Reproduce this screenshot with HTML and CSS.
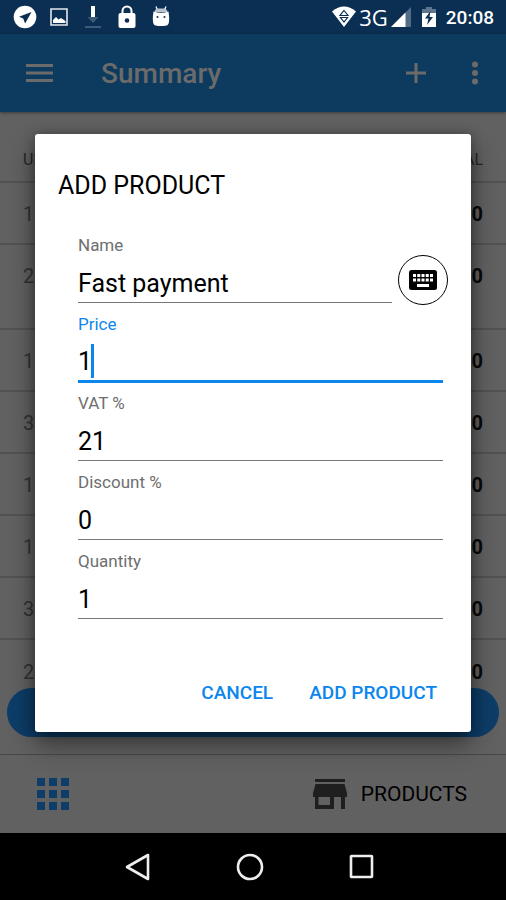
FILE: index.html
```html
<!DOCTYPE html>
<html lang="en">
<head>
<meta charset="utf-8">
<meta name="viewport" content="width=device-width, initial-scale=1">
<title>Summary</title>
<link rel="stylesheet" href="styles.css">
</head>
<body>
<div class="status">
  <div class="status-left">
    <svg class="telegram" width="24" height="24" viewBox="0 0 24 24"><circle cx="12" cy="12" r="11.3" fill="#fff"/><path d="M18.500 7L6 11.800l4.200 1.700 1.900 5z" fill="#0b2f52"/></svg>
    <svg width="18" height="24" viewBox="0 0 18 24"><path d="M1 4h16v16H1z" fill="none" stroke="#e4e8ec" stroke-width="1.600"/><path d="M3 18v-3l3-3 2.500 2.500L11 13l4.500 3v2z" fill="#fff"/></svg>
    <svg width="18" height="24" viewBox="0 0 18 24"><path d="M3.500 12h11L9 18z" fill="#3c5b77"/><path d="M7 1h4v11H7z" fill="#fff"/><path d="M1 21h16v2H1z" fill="#3c5b77"/></svg>
    <svg width="18" height="24" viewBox="0 0 18 24"><path d="M4.500 10V6a4.500 4.500 0 0 1 9 0v4" fill="none" stroke="#fff" stroke-width="2"/><rect x=".5" y="8" width="17" height="15" rx="2" fill="#fff"/><circle cx="9" cy="15.500" r="2.300" fill="#0b2f52"/></svg>
    <svg width="18" height="24" viewBox="0 0 18 24"><path d="M5.500 5L4 1.500M12.500 5L14 1.500" stroke="#fff" stroke-width="1.300"/><path d="M2.500 7Q3 3.500 6 3.500h6q3 0 3.500 3.500z" fill="#bac5cf"/><path d="M1.500 6.500q7.500 2.500 15 0Q18.500 20 14.500 20.500q-5.500 1-11 0Q-.5 20 1.500 6.500z" fill="#fff"/><circle cx="5.500" cy="12" r="1" fill="#0b2f52"/><circle cx="12.500" cy="12" r="1" fill="#0b2f52"/></svg>
  </div>
  <div class="status-right">
    <svg width="26" height="24" viewBox="0 0 26 24"><path d="M1 6.500Q13-3.500 25 6.500L13 22z" fill="#fff"/><path d="M13 5.500l4 5H9zM9.500 12.500h7L13 17z" fill="#fff" stroke="#0b2f52" stroke-width="1.200"/></svg>
    <span class="net">3G</span>
    <svg width="20" height="24" viewBox="0 0 20 24"><path d="M0 22L20 2v20z" fill="#526c85"/><path d="M0 22L14.500 7.500V22z" fill="#fff"/></svg>
    <svg class="battery" width="14" height="24" viewBox="0 0 14 24"><path d="M0 4h4V2h6v2h4v5H0z" fill="#5f778d"/><path d="M0 8h14v14H0z" fill="#fff"/><path d="M8.500 6L3 13.500h3.500L5 20l6-8H7.500z" fill="#0b2f52"/></svg>
    <time class="clock">20:08</time>
  </div>
</div>

<div class="screen">
  <header class="appbar">
    <button class="icon-btn" aria-label="Menu"><svg width="27" height="20" viewBox="0 0 27 20"><path d="M0 2.500h27M0 10h27M0 17.500h27" stroke="#6b6b6b" stroke-width="3"/></svg></button>
    <h1>Summary</h1>
    <button class="icon-btn" aria-label="Add"><svg width="20" height="20" viewBox="0 0 20 20"><path d="M10 0v20M0 10h20" stroke="#6b6b6b" stroke-width="3"/></svg></button>
    <button class="icon-btn" aria-label="More"><svg width="8" height="24" viewBox="0 0 8 24" fill="#6b6b6b"><circle cx="4" cy="3.500" r="3"/><circle cx="4" cy="12" r="3"/><circle cx="4" cy="20.500" r="3"/></svg></button>
  </header>

  <main class="list">
    <table>
      <thead><tr><th>UNITS</th><th>TOTAL</th></tr></thead>
      <tbody>
        <tr><td>1</td><td>50</td></tr>
        <tr class="tall"><td>2</td><td>00</td></tr>
        <tr><td>1</td><td>50</td></tr>
        <tr><td>3</td><td>00</td></tr>
        <tr><td>1</td><td>50</td></tr>
        <tr><td>1</td><td>00</td></tr>
        <tr><td>3</td><td>50</td></tr>
        <tr><td>2</td><td>00</td></tr>
      </tbody>
    </table>
    <button class="pay" aria-label="Pay"></button>
  </main>

  <footer class="bottom">
    <button class="icon-btn" aria-label="Grid"><svg width="34" height="34" viewBox="0 0 34 34" fill="#0d3d68"><path d="M1 1h8v8H1zM13 1h8v8h-8zM25 1h8v8h-8zM1 13h8v8H1zM13 13h8v8h-8zM25 13h8v8h-8zM1 25h8v8H1zM13 25h8v8h-8zM25 25h8v8h-8z"/></svg></button>
    <button class="products"><svg width="34" height="32" viewBox="0 0 34 32"><path d="M2 1h30v3H2zM2.500 6h29L34 15v4h-2v12h-4V19h-7v12H2V19H0v-4zM5.500 19v8H17v-8z" fill="#1f1f1f" fill-rule="evenodd"/></svg>PRODUCTS</button>
  </footer>

  <div class="overlay">
    <form class="dialog" role="dialog" aria-labelledby="dlg-title">
      <h2 id="dlg-title">ADD PRODUCT</h2>
      <div class="fields">
        <div class="name-row">
          <div class="field"><label for="name">Name</label><input id="name" type="text" value="Fast payment"></div>
          <button type="button" class="keyboard" aria-label="Keyboard"><svg width="28" height="20" viewBox="0 0 28 20"><rect width="28" height="20" rx="2.500"/><path d="M4 4h3v3H4zM8.250 4h3v3h-3zM12.500 4h3v3h-3zM16.750 4h3v3h-3zM21 4h3v3h-3zM4 8.500h3v3H4zM8.250 8.500h3v3h-3zM12.500 8.500h3v3h-3zM16.750 8.500h3v3h-3zM21 8.500h3v3h-3zM8 14h12v3H8z" fill="#fff"/></svg></button>
        </div>
        <div class="field active"><label for="price">Price</label><input id="price" type="text" value="1"><span class="caret"></span></div>
        <div class="field"><label for="vat">VAT %</label><input id="vat" type="text" value="21"></div>
        <div class="field"><label for="discount">Discount %</label><input id="discount" type="text" value="0"></div>
        <div class="field"><label for="quantity">Quantity</label><input id="quantity" type="text" value="1"></div>
      </div>
      <div class="actions"><button type="button">CANCEL</button><button type="button">ADD PRODUCT</button></div>
    </form>
  </div>
</div>

<nav class="navbar">
  <button class="icon-btn" aria-label="Back"><svg width="26" height="28" viewBox="0 0 26 28"><path d="M23 2v24L2 14z" fill="none" stroke="#eee" stroke-width="2.600" stroke-linejoin="round"/></svg></button>
  <button class="icon-btn" aria-label="Home"><svg width="28" height="28" viewBox="0 0 28 28"><circle cx="14" cy="14" r="12" fill="none" stroke="#eee" stroke-width="2.600"/></svg></button>
  <button class="icon-btn" aria-label="Recent apps"><svg width="26" height="26" viewBox="0 0 26 26"><rect x="2" y="2" width="21" height="21" rx=".5" fill="none" stroke="#eee" stroke-width="2.600"/></svg></button>
</nav>
</body>
</html>
```
FILE: styles.css
```css
* { box-sizing: border-box; }
body {
  margin: 0;
  min-height: 100vh;
  display: flex;
  flex-direction: column;
  font-family: Roboto, "Liberation Sans", sans-serif;
  background: #000;
  color: #000;
}
button { border: 0; background: none; padding: 0; font: inherit; color: inherit; }
svg { display: block; flex: none; }
h1, h2 { margin: 0; }

.status {
  height: 34px;
  padding: 0 12px 0 13px;
  display: flex;
  justify-content: space-between;
  align-items: center;
  background: #0b2f52;
  color: #fff;
}
.status-left { display: flex; gap: 16px; }
.telegram { margin-right: -3px; }
.status-right { display: flex; align-items: center; }
.net { font-family: "Open Sans", "Noto Sans", sans-serif; font-size: 22px; line-height: 34px; margin: 0 3px 0 2px; }
.battery { margin: 0 10px 0 11px; }
.clock { font-size: 19px; font-weight: 500; }

.screen {
  flex: 1;
  display: flex;
  flex-direction: column;
  position: relative;
  background: #616161;
}
.appbar {
  height: 78px;
  padding: 0 27px 0 26px;
  display: flex;
  align-items: center;
  background: #0d3a5f;
  color: #6b6b6b;
  box-shadow: 0 1px 3px rgba(0, 0, 0, .4);
}
.appbar h1 { flex: 1; margin-left: 48px; font-size: 28px; font-weight: 500; }
.appbar .icon-btn + .icon-btn { margin-left: 45px; }

.list { flex: 1; position: relative; }
table { width: 100%; border-collapse: collapse; }
tr { height: 62px; border-bottom: 2px solid #525252; }
thead tr { height: 70px; }
tr:last-child { border-bottom: 0; }
thead tr:last-child { border-bottom: 2px solid #525252; }
th { padding: 26px 23px 0; font-size: 16px; font-weight: 400; text-align: left; color: #262626; }
td { padding: 2px 23px 0; font-size: 20px; color: #333; }
.tall { height: 85px; }
.tall td { vertical-align: top; padding-top: 19px; }
th:last-child, td:last-child { text-align: right; }
td:last-child { font-weight: 700; color: #0a0a0a; }
.pay {
  position: absolute;
  left: 7px;
  right: 7px;
  bottom: 17px;
  height: 49px;
  border-radius: 25px;
  background: #0d3d68;
}

.bottom {
  height: 79px;
  padding: 0 39px 0 36px;
  display: flex;
  align-items: center;
  justify-content: space-between;
  border-top: 1px solid #484848;
}
.products { display: flex; align-items: center; gap: 14px; font-size: 21px; }

.overlay {
  position: absolute;
  inset: 0;
  padding: 0 35px 2px;
  display: flex;
  align-items: center;
}
.dialog {
  flex: 1;
  padding: 36px 22px 16px 23px;
  border-radius: 3px;
  background: #fff;
  box-shadow: 0 12px 26px rgba(0, 0, 0, .45), 0 1px 12px rgba(0, 0, 0, .3);
}
.dialog h2 { font-size: 25px; line-height: 32px; font-weight: 400; }
.fields { display: grid; gap: 11px; margin: 33px 6px 0 20px; }
.name-row { display: flex; gap: 6px; align-items: flex-start; margin-right: -5px; }
.name-row .field { flex: 1; }
.field { display: flex; flex-direction: column; position: relative; min-width: 0; }
.field label { font-size: 17px; line-height: 20px; color: #6e6e6e; }
.field input {
  width: 100%;
  height: 48px;
  padding: 10px 0 0;
  border: 0;
  border-bottom: 1px solid #777;
  border-radius: 0;
  outline: 0;
  background: none;
  font: inherit;
  font-size: 25px;
  color: #000;
}
.field.active label { color: #0b86ee; }
.field.active input { height: 49px; margin-bottom: -1px; border-bottom: 3px solid #0b86ee; }
.caret { position: absolute; left: 13px; top: 30px; width: 3px; height: 34px; background: #0b86ee; }
.keyboard {
  width: 50px;
  height: 50px;
  margin: 20px 0 -2px;
  display: grid;
  place-items: center;
  border: 1px solid #000;
  border-radius: 50%;
}
.actions { display: flex; justify-content: flex-end; gap: 36px; margin-top: 51px; padding-right: 12px; }
.actions button { height: 46px; font-size: 19px; font-weight: 500; color: #0b86ee; }

.navbar {
  height: 67px;
  padding-right: 6px;
  display: flex;
  align-items: center;
  justify-content: center;
  gap: 85px;
  background: #000;
}
```
